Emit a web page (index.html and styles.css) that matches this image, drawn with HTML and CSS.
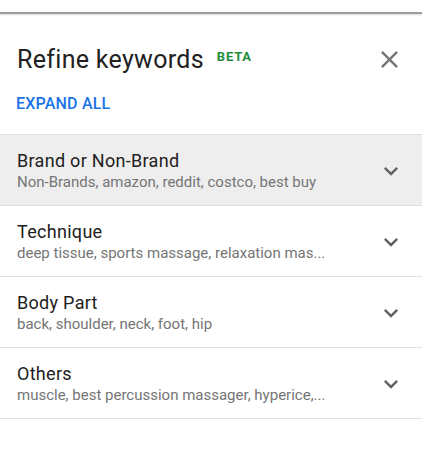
FILE: index.html
```html
<!DOCTYPE html>
<html lang="en">
<head>
  <meta charset="UTF-8">
  <title>Refine keywords</title>
  <link rel="stylesheet" href="styles.css">
</head>
<body>
  <div class="topbar"></div>

  <div class="panel">
    <div class="header">
      <h1 class="title">Refine keywords</h1>
      <span class="beta">BETA</span>
      <button class="close" aria-label="Close">
        <svg viewBox="0 0 24 24" width="29" height="29"><path d="M19 6.41L17.59 5 12 10.59 6.41 5 5 6.41 10.59 12 5 17.59 6.41 19 12 13.41 17.59 19 19 17.59 13.41 12z"/></svg>
      </button>
    </div>

    <a class="expand" href="#">EXPAND ALL</a>

    <ul class="groups">
      <li class="group active">
        <div class="text">
          <div class="name">Brand or Non-Brand</div>
          <div class="items">Non-Brands, amazon, reddit, costco, best buy</div>
        </div>
        <svg class="chev" viewBox="0 0 24 24" width="28" height="28"><path d="M16.59 8.59L12 13.17 7.41 8.59 6 10l6 6 6-6z"/></svg>
      </li>
      <li class="group">
        <div class="text">
          <div class="name">Technique</div>
          <div class="items" title="deep tissue, sports massage, relaxation massage">deep tissue, sports massage, relaxation mas...</div>
        </div>
        <svg class="chev" viewBox="0 0 24 24" width="28" height="28"><path d="M16.59 8.59L12 13.17 7.41 8.59 6 10l6 6 6-6z"/></svg>
      </li>
      <li class="group">
        <div class="text">
          <div class="name">Body Part</div>
          <div class="items">back, shoulder, neck, foot, hip</div>
        </div>
        <svg class="chev" viewBox="0 0 24 24" width="28" height="28"><path d="M16.59 8.59L12 13.17 7.41 8.59 6 10l6 6 6-6z"/></svg>
      </li>
      <li class="group">
        <div class="text">
          <div class="name">Others</div>
          <div class="items" title="muscle, best percussion massager, hyperice">muscle, best percussion massager, hyperice,...</div>
        </div>
        <svg class="chev" viewBox="0 0 24 24" width="28" height="28"><path d="M16.59 8.59L12 13.17 7.41 8.59 6 10l6 6 6-6z"/></svg>
      </li>
    </ul>
  </div>
</body>
</html>
```

FILE: styles.css
```css
body { margin: 0; background: #fff; font-family: Roboto, "Liberation Sans", Arial, sans-serif; color: #212121; }

.topbar { height: 12px; border-bottom: 2px solid #9e9e9e; box-shadow: 0 1px 2px rgba(0,0,0,.15); }

.header { display: flex; align-items: flex-start; padding: 30px 18px 0 17px; }
.title { margin: 0; font-size: 25px; line-height: 32px; font-weight: 400; letter-spacing: .3px; color: #212121; }
.beta { margin: 7px 0 0 13px; font-size: 13px; line-height: 12px; font-weight: 700; color: #1e8e3e; letter-spacing: .8px; }
.close { margin-left: auto; margin-top: 1px; padding: 0; border: 0; background: none; width: 29px; height: 29px; }
.close svg { display: block; fill: #757575; }

.expand { display: inline-block; margin: 18px 0 0 16px; font-size: 16px; line-height: 20px; font-weight: 500; letter-spacing: .2px; color: #1a73e8; text-decoration: none; }

.groups { list-style: none; margin: 20px 0 0; padding: 0; border-top: 1px solid #e0e0e0; }
.group { display: flex; align-items: center; padding: 15px 17px 13px 17px; border-bottom: 1px solid #e0e0e0; }
.group.active { background: #eeeeee; }
.text { flex: 1; min-width: 0; margin-right: 40px; }
.name { font-size: 18px; line-height: 22px; letter-spacing: .3px; color: #212121; }
.items { font-size: 15px; line-height: 20px; color: #757575; white-space: nowrap; overflow: hidden; text-overflow: ellipsis; }
.chev { flex: none; fill: #616161; }
```
